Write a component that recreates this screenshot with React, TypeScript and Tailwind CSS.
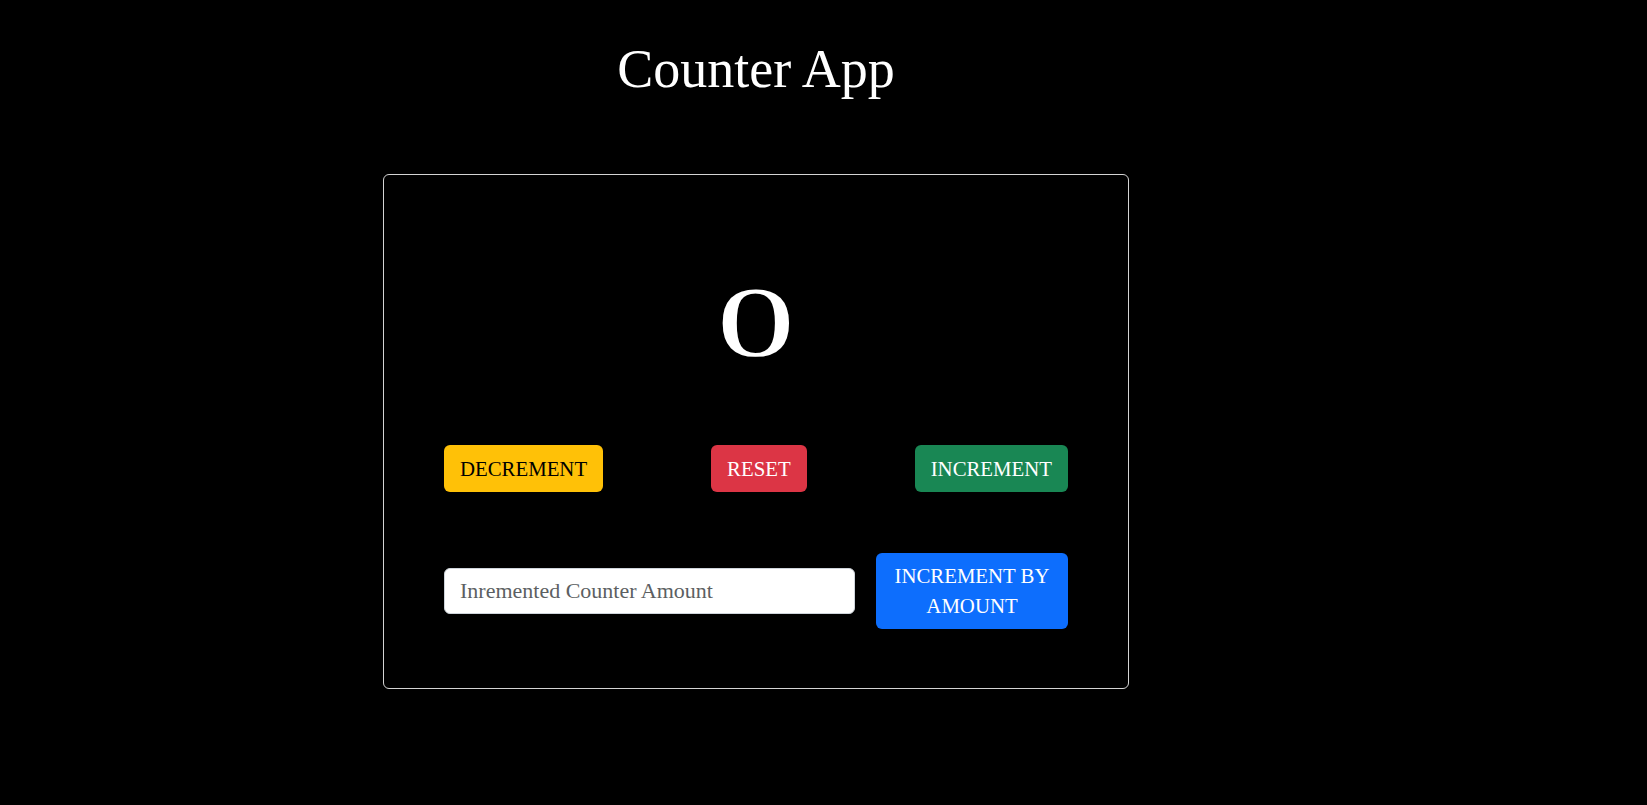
import React, { useState } from "react";

export default function App() {
  const [count, setCount] = useState(0);
  const [amount, setAmount] = useState("");

  return (
    <div className="min-h-[805px] w-full bg-black font-['Liberation_Serif',serif] text-white">
      <div className="ml-[383px] flex w-[746px] flex-col">
        <h1 className="mt-[42px] h-[54px] text-center text-[54px] leading-none font-normal text-white">
          Counter App
        </h1>
        <div className="mt-[78px] flex flex-col rounded-md border border-[#d4d4d4] px-[60px] pb-[59px]">
          <div className="mt-[97px] flex h-[100px] justify-center text-[99px] leading-[100px] text-white">
            <span className="inline-block scale-x-[1.58]">{count}</span>
          </div>
          <div className="mt-[73px] flex items-center justify-between">
            <button
              onClick={() => setCount((c) => c - 1)}
              className="flex h-[47px] items-center rounded-md bg-[#ffc107] px-4 text-[20.8px] leading-[30px] text-black"
            >
              DECREMENT
            </button>
            <button
              onClick={() => setCount(0)}
              className="flex h-[47px] items-center rounded-md bg-[#dc3545] px-4 text-[20.8px] leading-[30px] text-white"
            >
              RESET
            </button>
            <button
              onClick={() => setCount((c) => c + 1)}
              className="flex h-[47px] items-center rounded-md bg-[#198754] px-4 text-[20.8px] leading-[30px] text-white"
            >
              INCREMENT
            </button>
          </div>
          <div className="mt-[61px] flex items-center gap-[21px]">
            <input
              value={amount}
              onChange={(e) => setAmount(e.target.value)}
              placeholder="Inremented Counter Amount"
              className="h-[46px] min-w-0 flex-1 rounded-md border border-[#ced4da] bg-white px-[15px] text-[22px] text-[#212529] outline-none placeholder:text-[#5c5f62]"
            />
            <button
              onClick={() => setCount((c) => c + (Number(amount) || 0))}
              className="h-[76px] w-[192px] shrink-0 rounded-md bg-[#0d6efd] px-4 py-2 text-center text-[20.8px] leading-[30px] text-white"
            >
              INCREMENT BY AMOUNT
            </button>
          </div>
        </div>
      </div>
    </div>
  );
}
